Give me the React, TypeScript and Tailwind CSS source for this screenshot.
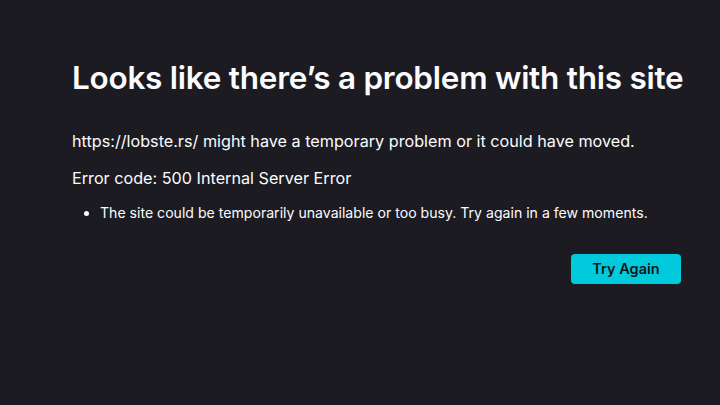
export default function App() {
  return (
    <div
      className="min-h-[405px] w-full bg-[#1c1b22] text-[#fbfbfe]"
      style={{ fontFamily: "Inter, 'Noto Sans', sans-serif" }}
    >
      <div className="ml-[72px] w-[609px] pt-[57px]">
        <h1 className="whitespace-nowrap text-[31.5px] font-semibold leading-[42px] tracking-[-0.25px]">
          Looks like there’s a problem with this site
        </h1>
        <p className="mt-[30px] whitespace-nowrap text-[16.2px] leading-[24px]">
          https://lobste.rs/ might have a temporary problem or it could have moved.
        </p>
        <p className="mt-[13px] whitespace-nowrap text-[16.2px] leading-[24px]">
          Error code: 500 Internal Server Error
        </p>
        <ul className="mt-[12px] list-disc pl-[28px] text-[14.1px] leading-[22px]">
          <li className="whitespace-nowrap">
            The site could be temporarily unavailable or too busy. Try again in a few moments.
          </li>
        </ul>
        <div className="mt-[30px] flex justify-end">
          <button className="h-[30px] w-[110px] rounded-[4px] bg-[#00cadb] text-[14.5px] font-semibold text-[#15141a]">
            Try Again
          </button>
        </div>
      </div>
    </div>
  );
}
